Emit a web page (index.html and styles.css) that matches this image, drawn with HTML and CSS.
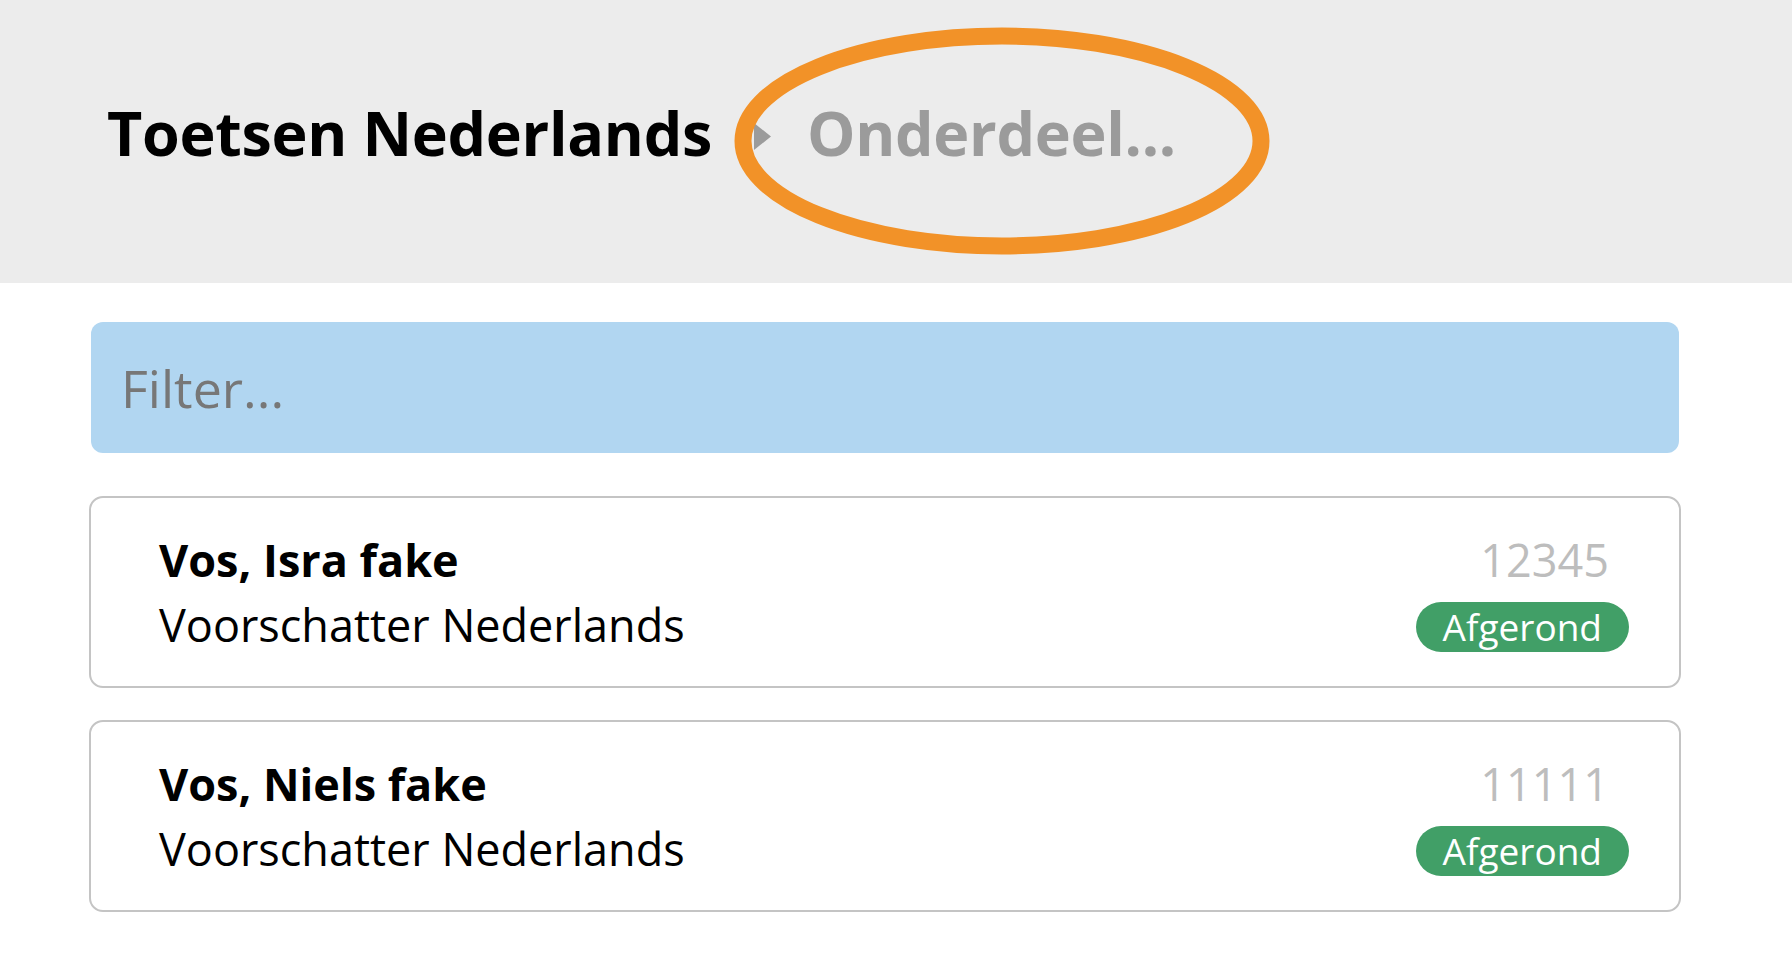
FILE: index.html
```html
<!DOCTYPE html>
<html lang="nl">
<head>
    <meta charset="UTF-8">
    <meta name="viewport" content="width=device-width, initial-scale=1.0">
    <title>Toetsen Nederlands</title>
    <link rel="stylesheet" href="styles.css">
</head>
<body>
    <!-- Header with breadcrumb -->
    <header class="page-header">
        <h1 class="crumb">Toetsen Nederlands</h1>
        <svg class="crumb-sep" width="17" height="27" viewBox="0 0 17 27">
            <path d="M0 0 L17 13.5 L0 27 Z" fill="#9b9b9b"/>
        </svg>
        <span class="crumb crumb-current">Onderdeel...</span>

        <!-- Annotation circle -->
        <svg class="annotation" width="536" height="228" viewBox="0 0 536 228">
            <ellipse cx="268" cy="114" rx="259" ry="105" fill="none" stroke="#f29228" stroke-width="17"/>
        </svg>
    </header>

    <main class="content">
        <input class="filter" type="text" placeholder="Filter...">

        <div class="student-card">
            <div class="student-info">
                <div class="student-name">Vos, Isra fake</div>
                <div class="student-role">Voorschatter Nederlands</div>
            </div>
            <div class="student-meta">
                <div class="student-number">12345</div>
                <span class="status-badge">Afgerond</span>
            </div>
        </div>

        <div class="student-card">
            <div class="student-info">
                <div class="student-name">Vos, Niels fake</div>
                <div class="student-role">Voorschatter Nederlands</div>
            </div>
            <div class="student-meta">
                <div class="student-number">11111</div>
                <span class="status-badge">Afgerond</span>
            </div>
        </div>
    </main>
</body>
</html>
```

FILE: styles.css
```css
body {
    font-family: "Open Sans", "Liberation Sans", sans-serif;
    margin: 0;
    padding: 0;
    background-color: #fff;
    color: #000;
}

/* Header */
.page-header {
    position: relative;
    height: 283px;
    box-sizing: border-box;
    padding: 91px 0 0 107px;
    background-color: #ececec;
    display: flex;
    align-items: flex-start;
}

.crumb {
    margin: 0;
    font-size: 61px;
    font-weight: 700;
    line-height: 83px;
    letter-spacing: -0.3px;
    color: #000;
}

.crumb-current {
    color: #9b9b9b;
}

.crumb-sep {
    margin: 32px 36px 0 42px;
}

.annotation {
    position: absolute;
    left: 734px;
    top: 27px;
}

/* Content */
.content {
    padding: 39px 111px 0 89px;
}

.filter {
    display: block;
    width: calc(100% - 4px);
    height: 131px;
    margin: 0 2px;
    box-sizing: border-box;
    padding: 0 30px;
    border: none;
    border-radius: 12px;
    background-color: #b1d6f1;
    font-family: inherit;
    font-size: 52px;
    color: #777;
    outline: none;
}

.filter::placeholder {
    color: #777;
}

/* Student cards */
.student-card {
    display: flex;
    justify-content: space-between;
    margin-top: 43px;
    padding: 29px 50px 29px 68px;
    border: 2px solid #c4c4c4;
    border-radius: 14px;
}

.student-card + .student-card {
    margin-top: 32px;
}

.student-name,
.student-role,
.student-number {
    font-size: 45px;
    line-height: 65px;
}

.student-name {
    font-weight: 700;
}

.student-meta {
    display: flex;
    flex-direction: column;
    align-items: flex-end;
}

.student-number {
    margin-right: 20px;
    color: #bdbdbd;
}

.status-badge {
    margin-top: 10px;
    height: 50px;
    padding: 0 27px;
    border-radius: 25px;
    background-color: #419f67;
    color: #fff;
    font-size: 37px;
    line-height: 50px;
}
```
